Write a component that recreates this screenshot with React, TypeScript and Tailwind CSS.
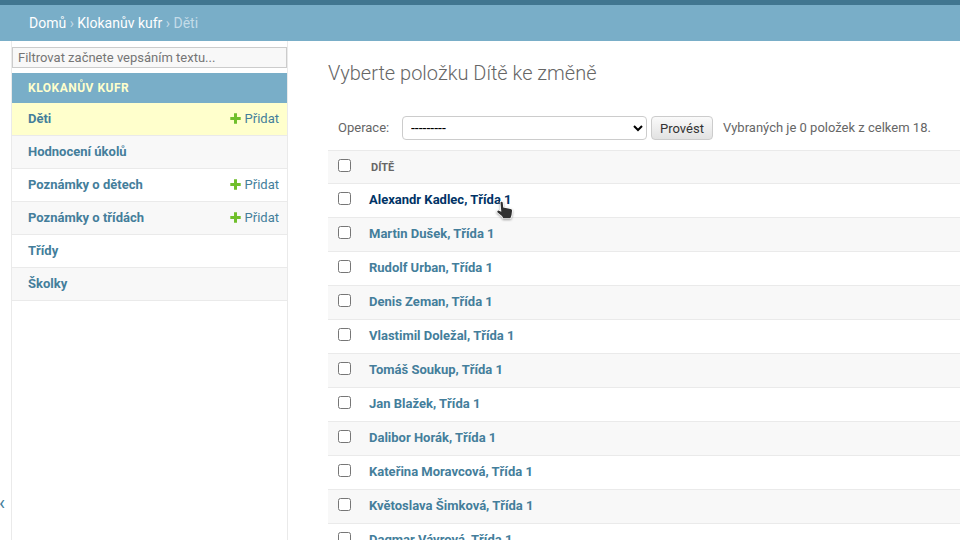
const models = [
  { name: 'Děti', add: true, current: true },
  { name: 'Hodnocení úkolů' },
  { name: 'Poznámky o dětech', add: true },
  { name: 'Poznámky o třídách', add: true },
  { name: 'Třídy' },
  { name: 'Školky' },
];

const children = [
  'Alexandr Kadlec',
  'Martin Dušek',
  'Rudolf Urban',
  'Denis Zeman',
  'Vlastimil Doležal',
  'Tomáš Soukup',
  'Jan Blažek',
  'Dalibor Horák',
  'Kateřina Moravcová',
  'Květoslava Šimková',
  'Dagmar Vávrová',
];

function HandPointer() {
  return (
    <svg className="absolute left-[496px] top-[201px] drop-shadow-[0_1px_1px_rgba(0,0,0,0.35)]" width="18" height="20" viewBox="0 0 18 20">
      <path
        d="M4.5 1.6C4.6.3 6.5.3 6.7 1.6L7.2 6.6l7.4 1.5c1 .2 1.5.9 1.4 1.9l-.5 4-1.1 3.2H7.2L6 14.9 1.6 11.4c-.8-1 .2-2.1 1.4-1.7l2.3 1z"
        fill="#303030"
        stroke="#fff"
        strokeWidth="1.6"
        strokeLinejoin="round"
        paintOrder="stroke"
      />
    </svg>
  );
}

function Sidebar() {
  return (
    <nav className="ml-[11px] w-[277px] shrink-0 border-x border-[#eaeaea] pt-1.5">
      <input
        className="block h-[21px] w-full border border-[#ccc] bg-[#f8f8f8] px-[5px] text-[13px] placeholder:text-[#757575]"
        placeholder="Filtrovat začnete vepsáním textu..."
      />
      <h2 className="mt-[5px] h-[30px] bg-[#79aec8] pl-4 text-[12px] font-bold leading-[30px] tracking-[0.5px] text-[#ffc]">
        KLOKANŮV KUFR
      </h2>
      {models.map((m, i) => (
        <div
          key={m.name}
          className={`flex h-[33px] items-center justify-between border-b border-[#eaeaea] pl-4 pr-2 text-[13px] text-[#447e9b] ${
            m.current ? 'bg-[#ffc]' : i % 2 ? 'bg-[#f8f8f8]' : 'bg-white'
          }`}
        >
          <span className="font-bold">{m.name}</span>
          {m.add && (
            <span className="flex items-center gap-1">
              <svg className="mb-0.5" width="11" height="11" viewBox="0 0 11 11">
                <path d="M4 .3h3V4h3.7v3H7v3.7H4V7H.3V4H4z" fill="#70bf2b" />
              </svg>
              Přidat
            </span>
          )}
        </div>
      ))}
    </nav>
  );
}

export default function App() {
  return (
    <div className="relative flex h-[540px] w-[960px] flex-col overflow-hidden bg-white font-[Roboto,sans-serif] text-[13px] text-[#666]">
      <div className="h-[5px] shrink-0 bg-[#417690]" />
      <div className="flex h-9 shrink-0 items-center whitespace-pre bg-[#79aec8] pl-[29px] text-[14px] text-[#c4dce8]">
        <span className="text-white">Domů</span> › <span className="text-white">Klokanův kufr</span> › Děti
      </div>
      <div className="flex min-h-0 flex-1">
        <Sidebar />
        <main className="ml-10 min-w-0 flex-1">
          <h1 className="mt-5 h-6 text-[20px] font-light leading-6">Vyberte položku Dítě ke změně</h1>
          <div className="mt-[31px] flex h-6 items-center pl-2.5">
            <span className="w-16">Operace:</span>
            <select className="h-6 w-[245px] rounded border border-[#ccc] bg-white pl-1 text-[14px] text-black">
              <option>---------</option>
            </select>
            <button className="ml-1 h-6 w-[62px] rounded border border-[#ccc] bg-linear-to-b from-[#fafafa] to-[#e2e2e2] pt-px text-[13px] leading-[22px] text-[#333]">
              Provést
            </button>
            <span className="ml-2.5">Vybraných je 0 položek z celkem 18.</span>
          </div>
          <div className="mt-2.5 flex h-[34px] items-center border-y border-[#eaeaea] bg-[#f8f8f8] pl-2.5">
            <input type="checkbox" className="mb-[3px] size-[13px]" />
            <span className="ml-5 pt-0.5 text-[11px] font-bold">DÍTĚ</span>
          </div>
          {children.map((name, i) => (
            <div
              key={name}
              className={`flex h-[34px] items-center border-b border-[#eaeaea] pb-0.5 pl-2.5 ${i % 2 ? 'bg-[#f8f8f8]' : 'bg-white'}`}
            >
              <input type="checkbox" className="mb-[3px] size-[13px]" />
              <span className={`ml-[18px] font-bold ${i === 0 ? 'text-[#036]' : 'text-[#447e9b]'}`}>{name}, Třída 1</span>
            </div>
          ))}
        </main>
      </div>
      <span className="absolute -left-px top-[489px] text-[20px] leading-[28px] text-[#447e9b]">‹</span>
      <HandPointer />
    </div>
  );
}
